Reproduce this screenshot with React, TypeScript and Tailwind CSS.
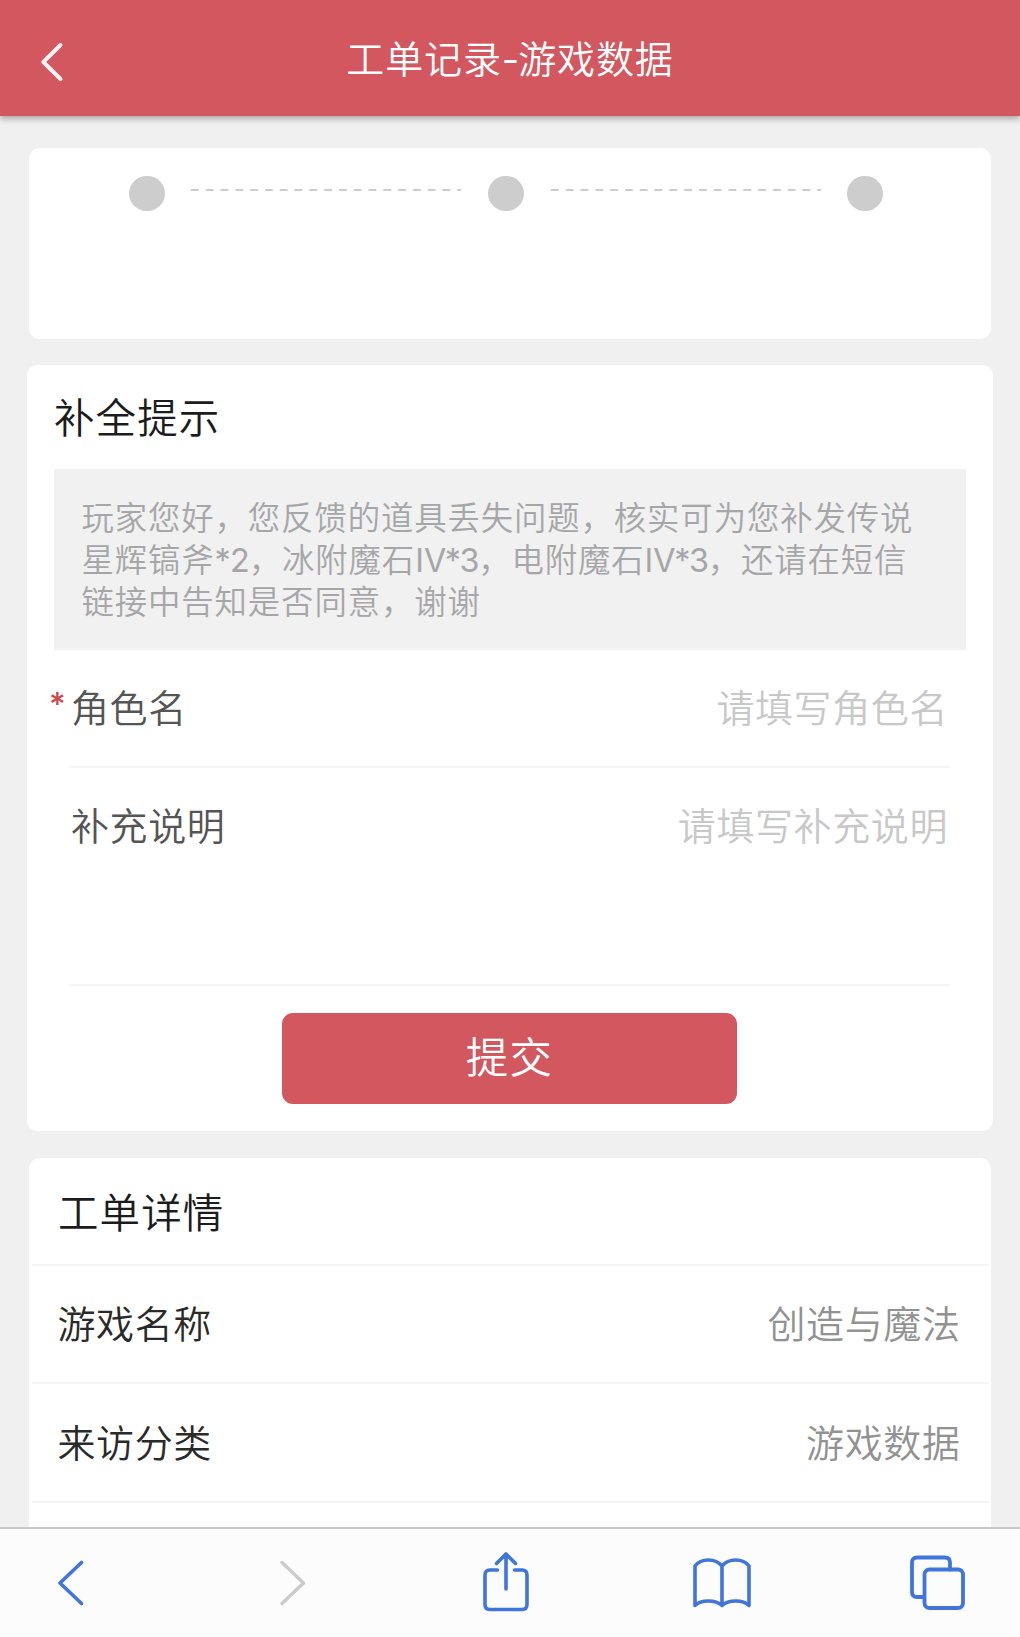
import React from "react";

const stroke = {
  fill: "none",
  strokeLinecap: "round" as const,
  strokeLinejoin: "round" as const,
};

function Dot() {
  return <div className="size-[35.5px] shrink-0 rounded-full bg-[#cdcdcd]" />;
}

function Dashes() {
  return (
    <svg width="270" height="2" className="mb-[6px] shrink-0">
      <line x1="0" y1="1" x2="270" y2="1" stroke="#cccccc" strokeWidth="2" strokeDasharray="7.8 7" />
    </svg>
  );
}

function Header() {
  return (
    <header className="relative z-10 flex h-[116px] shrink-0 items-center bg-[#d2575e] shadow-[0_3px_6px_rgba(0,0,0,0.3)]">
      <svg width="24" height="42" viewBox="0 0 24 42" className="ml-[40px] mt-[8px]" {...stroke} stroke="#fff4f2" strokeWidth="4">
        <path d="M20.5 4 L3.3 21 L20.5 38" />
      </svg>
      <h1 className="mr-[64px] flex-1 pt-[3px] text-center text-[38px] font-[350] tracking-[0.9px] text-white">
        工单记录<span className="font-normal tracking-[-1.2px]">-</span>游戏数据
      </h1>
    </header>
  );
}

function Steps() {
  return (
    <section className="mx-[29px] mt-[31.5px] flex h-[191px] shrink-0 justify-center rounded-[11px] bg-white pt-[28px]">
      <div className="mr-[8px] flex h-[35.5px] items-center gap-[26.8px]">
        <Dot />
        <Dashes />
        <Dot />
        <Dashes />
        <Dot />
      </div>
    </section>
  );
}

function Field({ label, placeholder, required, tall }: { label: string; placeholder: string; required?: boolean; tall?: boolean }) {
  return (
    <div
      className={
        "relative ml-[42px] mr-[44px] flex shrink-0 items-start justify-between border-b-2 border-[#f4f4f4] pl-[2px] pr-[1px] text-[38px] leading-[56px] tracking-[0.6px] " +
        (tall ? "h-[218px] pt-[30px]" : "h-[118px] pt-[30px]")
      }
    >
      {required && (
        <span className="absolute -left-[20px] top-[27px] font-['Inter'] text-[32px] font-medium text-[#cf4650]">*</span>
      )}
      <span className="font-[350] text-[#555]">{label}</span>
      <span className="font-[350] text-[#c8c8c8]">{placeholder}</span>
    </div>
  );
}

function Prompt() {
  return (
    <section className="mx-[27px] mt-[26.5px] flex h-[766px] shrink-0 flex-col rounded-[11px] bg-white">
      <h2 className="ml-[27px] flex h-[104px] shrink-0 items-center pt-[5px] text-[40.5px] font-[350] tracking-[1.1px] text-[#1c1c1c]">
        补全提示
      </h2>
      <div className="ml-[27px] mr-[27.5px] h-[181px] shrink-0 whitespace-nowrap bg-[#f1f1f1] pl-[27.5px] pt-[29.3px] text-[32.4px] font-[350] leading-[41.8px] tracking-[0.88px] text-[#a6a6a8]">
        <p>玩家您好，您反馈的道具丢失问题，核实可为您补发传说</p>
        <p>
          星辉镐斧<span className="font-normal tracking-[-0.9px]">*2</span>，冰附魔石
          <span className="font-normal tracking-[-1.4px]">Ⅳ*3</span>，电附魔石
          <span className="font-normal tracking-[-1.4px]">Ⅳ*3</span>，还请在短信
        </p>
        <p>链接中告知是否同意，谢谢</p>
      </div>
      <Field label="角色名" placeholder="请填写角色名" required />
      <Field label="补充说明" placeholder="请填写补充说明" tall />
      <button className="mr-px mt-[26.5px] flex h-[91px] w-[455px] shrink-0 items-center justify-center self-center rounded-[11px] bg-[#d2575e] pb-px text-[42.5px] font-[350] tracking-[1.2px] text-white">
        提交
      </button>
    </section>
  );
}

function DetailRow({ label, value }: { label: string; value: string }) {
  return (
    <div className="mx-[2.5px] flex h-[118.5px] shrink-0 items-center justify-between border-b-2 border-[#f4f4f4] px-[26px] pt-[2px] text-[38px] font-[350] tracking-[0.6px]">
      <span className="text-[#2a2a2a]">{label}</span>
      <span className="mr-[2px] text-[#929292]">{value}</span>
    </div>
  );
}

function Details() {
  return (
    <section className="mx-[29px] mt-[26.5px] flex min-h-0 flex-1 flex-col overflow-hidden rounded-t-[11px] bg-white">
      <h2 className="mx-[2.5px] flex h-[108.2px] shrink-0 items-center border-b-2 border-[#f5f5f5] pl-[26.5px] pt-[8px] text-[40.5px] font-[350] tracking-[1.1px] text-[#1c1c1c]">
        工单详情
      </h2>
      <DetailRow label="游戏名称" value="创造与魔法" />
      <DetailRow label="来访分类" value="游戏数据" />
    </section>
  );
}

function Toolbar() {
  return (
    <nav className="flex h-[110px] shrink-0 items-start border-t-2 border-[#c8c8c8] bg-[#fcfcfc] pt-px">
      <svg width="28" height="46" viewBox="0 0 28 46" className="ml-[57px] mt-[30px]" {...stroke} stroke="#3f75dc" strokeWidth="3.6">
        <path d="M24.5 2.5 L3 23 L24.5 43.5" />
      </svg>
      <svg width="28" height="46" viewBox="0 0 28 46" className="ml-[194px] mt-[30px]" {...stroke} stroke="#cbcbcb" strokeWidth="3.4">
        <path d="M3 2.5 L24.5 23 L3 43.5" />
      </svg>
      <svg width="50" height="62" viewBox="0 0 50 62" className="ml-[174px] mt-[21px]" {...stroke} stroke="#3f75dc" strokeWidth="3.6">
        <path d="M16.5 19 H9 Q4 19 4 24 V53.5 Q4 58.5 9 58.5 H41 Q46 58.5 46 53.5 V24 Q46 19 41 19 H33.5" />
        <path d="M25 38 V3 M15.5 12.5 L25 3 L34.5 12.5" />
      </svg>
      <svg width="62" height="54" viewBox="0 0 62 54" className="ml-[160px] mt-[27px]" {...stroke} stroke="#3f75dc" strokeWidth="3.6">
        <path d="M31 9 C24.5 1 10 1 4 9 V48.5 C10 42.5 24.5 42.5 31 48.5 C37.5 42.5 52 42.5 58 48.5 V9 C52 1 37.5 1 31 9 V48.5" />
      </svg>
      <svg width="58" height="58" viewBox="0 0 58 58" className="ml-[155px] mt-[25px]" {...stroke} stroke="#3f75dc" strokeWidth="3.8">
        <path d="M15 42 H9 Q4 42 4 37 V7.5 Q4 2.5 9 2.5 H37 Q42 2.5 42 7.5 V14.5" />
        <rect x="16.5" y="14.5" width="38.5" height="38.5" rx="5" />
      </svg>
    </nav>
  );
}

export default function App() {
  return (
    <div className="flex h-[1637px] w-[1020px] flex-col overflow-hidden bg-[#f0f0f0] font-['Inter','Noto_Sans_CJK_SC',sans-serif]" lang="zh-CN">
      <Header />
      <Steps />
      <Prompt />
      <Details />
      <Toolbar />
    </div>
  );
}
